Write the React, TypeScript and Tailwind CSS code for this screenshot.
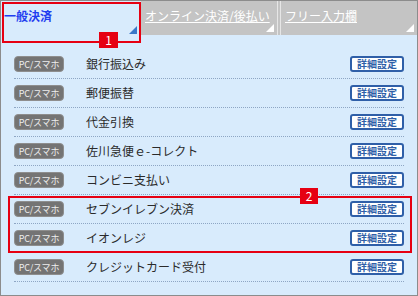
const rows = [
  "銀行振込み",
  "郵便振替",
  "代金引換",
  "佐川急便ｅ-コレクト",
  "コンビニ支払い",
  "セブンイレブン決済",
  "イオンレジ",
  "クレジットカード受付",
];

function Corner({ color }: { color: string }) {
  return (
    <svg className="absolute right-[3px] bottom-[3px]" width="8" height="8" viewBox="0 0 8 8">
      <polygon points="8,0 8,8 0,8" fill={color} />
    </svg>
  );
}

export default function App() {
  return (
    <div
      className="relative w-[418px] h-[296px] bg-[#d8ebfc] border border-[#8c8c8c] overflow-hidden"
      style={{ fontFamily: '"Noto Sans CJK JP", "Noto Sans", sans-serif' }}
    >
      {/* Tabs */}
      <div className="flex h-[36px] text-[12px] leading-none">
        <div className="relative w-[139px] h-full pl-[3px] pt-[9px] font-bold text-[#1f3df0]">
          一般決済
          <Corner color="#3a78c8" />
        </div>
        <div className="relative w-[137px] h-[34px] bg-[#c4c4c4] border-l border-[#e2e2e2] pl-[4px] pt-[9px] text-white underline">
          オンライン決済/後払い
          <Corner color="#ffffff" />
        </div>
        <div className="w-[4px] h-[34px] bg-[#c4c4c4] border-x border-[#e6e6e6]" />
        <div className="relative flex-1 h-[34px] bg-[#c4c4c4] pl-[4px] pt-[9px] text-white underline">
          フリー入力欄
          <Corner color="#ffffff" />
        </div>
      </div>

      {/* List */}
      <div className="px-[13px] pt-[13px]">
        {rows.map((label) => (
          <div
            key={label}
            className="flex items-center h-[29px] border-b border-dotted border-[#8ea6c4]"
          >
            <span className="flex items-center justify-center w-[50px] h-[16px] rounded-[4px] bg-[#747474] border border-[#8e8e8e] text-[9px] text-[#eeeeee] leading-none tracking-tight">
              PC/スマホ
            </span>
            <span className="ml-[22px] text-[12px] text-[#2a2a2a] leading-none">{label}</span>
            <span className="ml-auto flex items-center justify-center w-[54px] h-[16px] rounded-[3px] bg-white border-2 border-[#2f5fa8] text-[10px] font-bold text-[#2f5fa8] leading-none">
              詳細設定
            </span>
          </div>
        ))}
      </div>

      {/* Annotation 1 */}
      <div className="absolute left-[1px] top-[1px] w-[139px] h-[41px] border-2 border-[#e60012]" />
      <div className="absolute left-[98px] top-[31px] w-[19px] h-[16px] bg-[#e60012] text-white text-[12px] leading-[16px] text-center">
        1
      </div>

      {/* Annotation 2 */}
      <div className="absolute left-[7px] top-[195px] w-[404px] h-[57px] border-2 border-[#e60012]" />
      <div className="absolute left-[299px] top-[187px] w-[18px] h-[16px] bg-[#e60012] text-white text-[12px] leading-[16px] text-center">
        2
      </div>
    </div>
  );
}
